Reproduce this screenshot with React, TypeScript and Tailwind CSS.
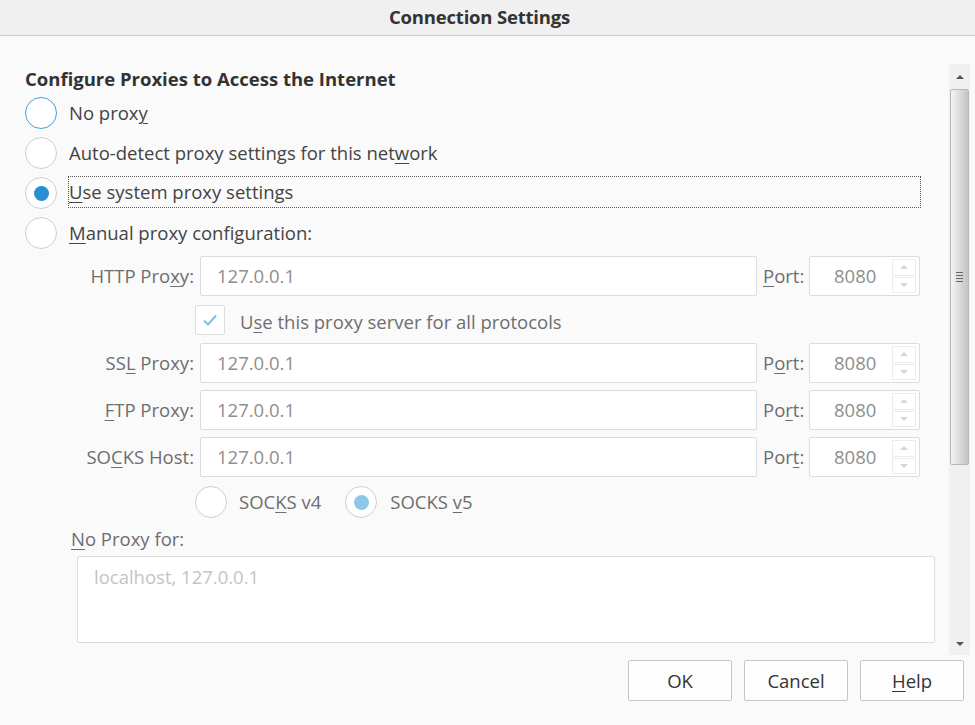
import React from "react";

const font = { fontFamily: "'Open Sans', 'Liberation Sans', sans-serif" };

function U({ children }: { children: React.ReactNode }) {
  return <span className="underline underline-offset-[3px] decoration-1">{children}</span>;
}

function Radio({ checked, focused, light }: { checked?: boolean; focused?: boolean; light?: boolean }) {
  return (
    <div
      className={`w-[32px] h-[32px] shrink-0 rounded-full bg-white flex items-center justify-center border-[1.5px] ${
        focused ? "border-[#3aa3df]" : "border-[#cfcfcf]"
      }`}
    >
      {checked && (
        <div className={`w-[15px] h-[15px] rounded-full ${light ? "bg-[#8ec8e8]" : "bg-[#2a8fd2]"}`} />
      )}
    </div>
  );
}

function Spin() {
  return (
    <div className="flex flex-col gap-[1px] w-[24px] h-[34px] mr-[3px]">
      <div className="flex-1 border border-[#ececec] flex items-center justify-center">
        <div className="w-0 h-0 border-x-[4px] border-x-transparent border-b-[4px] border-b-[#d6d6d6]" />
      </div>
      <div className="flex-1 border border-[#ececec] flex items-center justify-center">
        <div className="w-0 h-0 border-x-[4px] border-x-transparent border-t-[4px] border-t-[#d6d6d6]" />
      </div>
    </div>
  );
}

function ProxyRow({ label, port }: { label: React.ReactNode; port: React.ReactNode }) {
  return (
    <div className="flex items-center h-[40px]">
      <div className="w-[170px] text-right pr-[1px] text-[#6e6e6e] whitespace-nowrap">{label}</div>
      <div className="ml-[5px] w-[557px] h-[40px] bg-white border border-[#dcdcdc] rounded-[2px] flex items-center pl-[16px] text-[#8e8e8e]">
        127.0.0.1
      </div>
      <div className="ml-[6px] w-[40px] text-[#6e6e6e] whitespace-nowrap">{port}</div>
      <div className="ml-[6px] w-[111px] h-[40px] bg-white border border-[#dcdcdc] rounded-[2px] flex items-center justify-between">
        <span className="ml-[24px] text-[#8e8e8e]">8080</span>
        <Spin />
      </div>
    </div>
  );
}

export default function App() {
  return (
    <div className="w-[975px] h-[725px] bg-[#fafafa] flex flex-col overflow-hidden text-[18.5px] text-[#444]" style={font}>
      {/* title bar */}
      <div className="h-[36px] shrink-0 bg-[#f0f0f0] border-b border-[#cdcdcd] flex items-center justify-center pb-[1px] pr-[16px]">
        <span className="font-bold text-[18.5px] text-[#333] tracking-[-0.2px]">Connection Settings</span>
      </div>

      {/* scroll area */}
      <div className="mt-[28px] h-[591px] flex shrink-0">
        <div className="flex-1 pl-[25px] pt-[3px]">
          <div className="font-bold text-[18.5px] leading-[24px] text-[#333]">Configure Proxies to Access the Internet</div>

          <div className="mt-[2px] flex flex-col">
            <div className="h-[40px] flex items-center gap-[12px]">
              <Radio focused />
              <span>No prox<U>y</U></span>
            </div>
            <div className="h-[40px] flex items-center gap-[12px]">
              <Radio />
              <span>Auto-detect proxy settings for this net<U>w</U>ork</span>
            </div>
            <div className="h-[40px] flex items-center gap-[11px]">
              <Radio checked />
              <span className="w-[853px] h-[32px] flex items-center border border-dotted border-[#555] -mt-[2px]">
                <span><U>U</U>se system proxy settings</span>
              </span>
            </div>
            <div className="h-[40px] flex items-center gap-[12px]">
              <Radio />
              <span><U>M</U>anual proxy configuration:</span>
            </div>
          </div>

          <div className="mt-[3px]">
            <ProxyRow label={<>HTTP Pro<U>x</U>y:</>} port={<><U>P</U>ort:</>} />
            <div className="mt-[9px] h-[30px] flex items-center">
              <div className="ml-[170px] w-[30px] h-[30px] bg-white border border-[#dcdcdc] rounded-[2px] flex items-center justify-center">
                <svg width="16" height="14" viewBox="0 0 16 14">
                  <path d="M2 7.5 L6 11.5 L14 2.5" fill="none" stroke="#7fbfe6" strokeWidth="2" />
                </svg>
              </div>
              <span className="ml-[15px] mt-[3px] text-[#6e6e6e]">U<U>s</U>e this proxy server for all protocols</span>
            </div>
            <div className="mt-[8px]">
              <ProxyRow label={<>SS<U>L</U> Proxy:</>} port={<>P<U>o</U>rt:</>} />
            </div>
            <div className="mt-[7px]">
              <ProxyRow label={<><U>F</U>TP Proxy:</>} port={<>Po<U>r</U>t:</>} />
            </div>
            <div className="mt-[7px]">
              <ProxyRow label={<>SO<U>C</U>KS Host:</>} port={<>Por<U>t</U>:</>} />
            </div>
            <div className="mt-[9px] h-[32px] flex items-center text-[#6e6e6e]">
              <div className="ml-[170px]">
                <Radio />
              </div>
              <span className="ml-[12px]">SOC<U>K</U>S v4</span>
              <div className="ml-[24px]">
                <Radio checked light />
              </div>
              <span className="ml-[13px]">SOCKS <U>v</U>5</span>
            </div>
          </div>

          <div className="mt-[10px] ml-[46px] text-[#6e6e6e] leading-[22px]">
            <U>N</U>o Proxy for:
          </div>
          <div className="mt-[6px] ml-[52px] w-[858px] h-[87px] bg-white border border-[#dcdcdc] rounded-[2px] pl-[16px] pt-[7px] leading-[26px] text-[#c4c4c4]">
            localhost, 127.0.0.1
          </div>
        </div>

        {/* scrollbar */}
        <div className="w-[21px] mr-[5px] bg-[#f0f0f0] flex flex-col items-center">
          <div className="h-[25px] w-full flex items-center justify-center">
            <div className="w-0 h-0 border-x-[4px] border-x-transparent border-b-[4px] border-b-[#555]" />
          </div>
          <div className="w-[19px] h-[376px] rounded-[2px] border border-[#b8b8b8] bg-gradient-to-r from-[#f4f4f4] via-[#dcdcdc] to-[#c4c4c4] flex items-center justify-center">
            <div className="flex flex-col gap-[2px]">
              <div className="w-[7px] h-[1px] bg-[#666]" />
              <div className="w-[7px] h-[1px] bg-[#666]" />
              <div className="w-[7px] h-[1px] bg-[#666]" />
              <div className="w-[7px] h-[1px] bg-[#666]" />
            </div>
          </div>
          <div className="flex-1" />
          <div className="h-[22px] w-full flex items-center justify-center">
            <div className="w-0 h-0 border-x-[4px] border-x-transparent border-t-[4px] border-t-[#555]" />
          </div>
        </div>
      </div>

      {/* buttons */}
      <div className="mt-[5px] flex justify-end gap-[12px] pr-[11px]">
        {[<>OK</>, <>Cancel</>, <><U>H</U>elp</>].map((b, i) => (
          <button
            key={i}
            className="w-[104px] h-[41px] bg-[#fdfdfd] border border-[#c6c6c6] rounded-[2px] text-[18.5px] text-[#333]"
            style={font}
          >
            {b}
          </button>
        ))}
      </div>
    </div>
  );
}
